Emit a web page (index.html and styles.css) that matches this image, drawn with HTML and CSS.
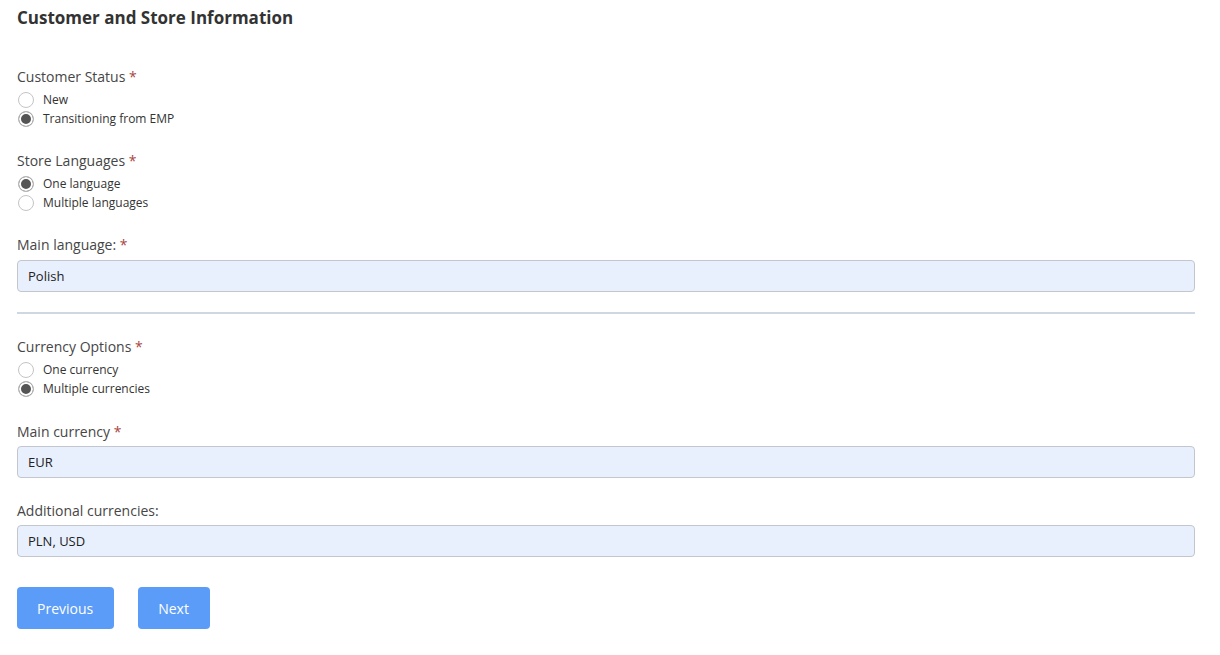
FILE: index.html
```html
<!DOCTYPE html>
<html lang="en">
<head>
<meta charset="utf-8">
<title>Customer and Store Information</title>
<link rel="stylesheet" href="styles.css">
</head>
<body>
<form class="form">
  <h2 class="title">Customer and Store Information</h2>

  <div class="group">
    <div class="label">Customer Status <span class="req">*</span></div>
    <label class="radio"><input type="radio" name="status"><span>New</span></label>
    <label class="radio"><input type="radio" name="status" checked><span>Transitioning from EMP</span></label>
  </div>

  <div class="group">
    <div class="label">Store Languages <span class="req">*</span></div>
    <label class="radio"><input type="radio" name="lang" checked><span>One language</span></label>
    <label class="radio"><input type="radio" name="lang"><span>Multiple languages</span></label>
  </div>

  <div class="group group-tight">
    <div class="label label-input">Main language: <span class="req">*</span></div>
    <div class="input">Polish</div>
  </div>

  <hr class="divider">

  <div class="group group-loose">
    <div class="label">Currency Options <span class="req">*</span></div>
    <label class="radio"><input type="radio" name="cur"><span>One currency</span></label>
    <label class="radio"><input type="radio" name="cur" checked><span>Multiple currencies</span></label>
  </div>

  <div class="group">
    <div class="label label-input label-close">Main currency <span class="req">*</span></div>
    <div class="input">EUR</div>
  </div>

  <div class="group">
    <div class="label label-input label-close">Additional currencies:</div>
    <div class="input">PLN, USD</div>
  </div>

  <div class="actions">
    <button type="button" class="btn">Previous</button>
    <button type="button" class="btn">Next</button>
  </div>
</form>
</body>
</html>
```

FILE: styles.css
```css
html, body {
  margin: 0;
  padding: 0;
  background: #ffffff;
}

body {
  font-family: "Open Sans", "Noto Sans", "Liberation Sans", sans-serif;
  color: #333333;
}

.form {
  padding: 0 25px 0 17px;
  display: flex;
  flex-direction: column;
}

.title {
  margin: 7px 0 38px 0;
  font-size: 17px;
  line-height: 22px;
  font-weight: 700;
  color: #333333;
}

.group {
  display: flex;
  flex-direction: column;
  margin-bottom: 23px;
}

.group-tight {
  margin-bottom: 20px;
}

.group-loose {
  margin-bottom: 24px;
}

.label {
  font-size: 14px;
  line-height: 20px;
  color: #464646;
  margin-bottom: 3px;
}

.label-input {
  margin-bottom: 5px;
}

.label-close {
  margin-bottom: 4px;
}

.req {
  color: #a94442;
}

.radio {
  display: flex;
  align-items: center;
  height: 19px;
  font-size: 12px;
  color: #333333;
}

.radio input {
  appearance: none;
  -webkit-appearance: none;
  margin: 0 9px 0 1px;
  width: 16px;
  height: 16px;
  border: 1px solid #c4c4c4;
  border-radius: 50%;
  background: #ffffff;
  box-sizing: border-box;
  flex: none;
}

.radio input:checked {
  background: #555555;
  box-shadow: inset 0 0 0 2px #ffffff;
  border-color: #b8b8b8;
}

.input {
  height: 32px;
  box-sizing: border-box;
  border: 1px solid #c3c7cd;
  border-radius: 4px;
  background: #e8f0fe;
  padding: 0 10px;
  display: flex;
  align-items: center;
  font-size: 13px;
  color: #222222;
}

.divider {
  margin: 0 0 23px 0;
  border: 0;
  height: 2px;
  background: #cfd8e0;
}

.actions {
  display: flex;
  gap: 24px;
  margin-top: 7px;
}

.btn {
  height: 42px;
  padding: 0 21px 0 20px;
  border: 0;
  border-radius: 4px;
  background: #5a9cf8;
  color: #ffffff;
  font-family: inherit;
  font-size: 14px;
}
```
